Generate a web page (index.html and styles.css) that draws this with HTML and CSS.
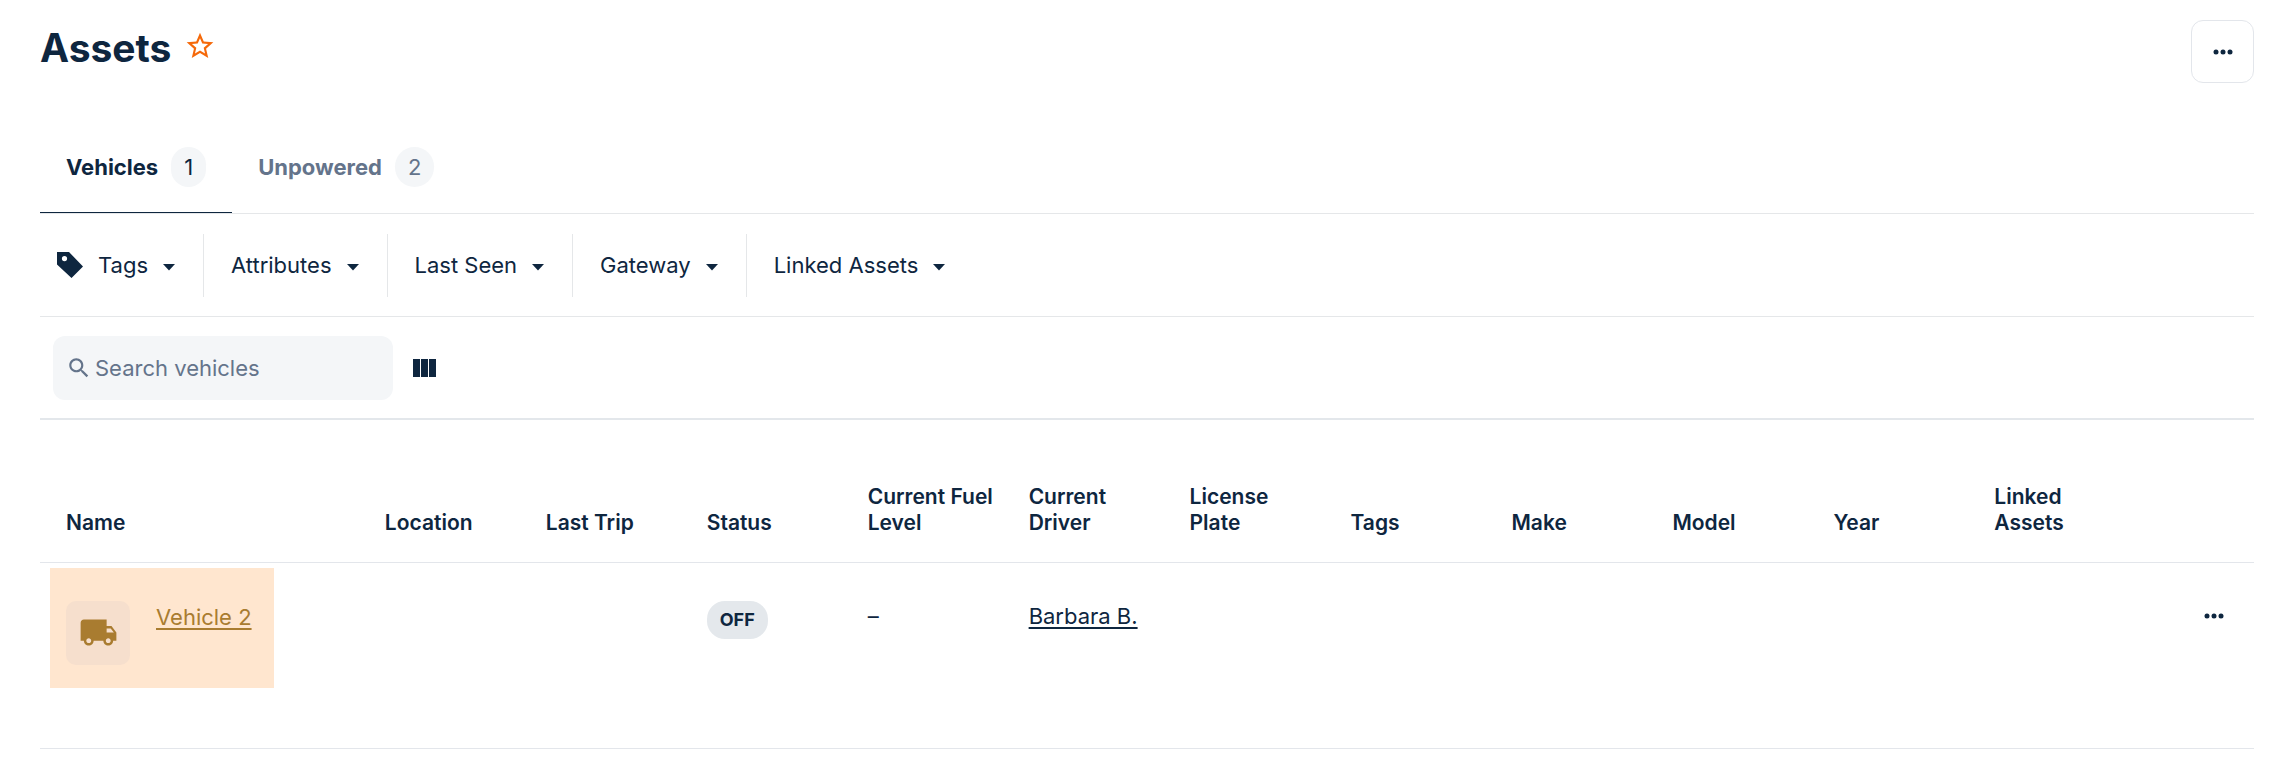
FILE: index.html
```html
<!DOCTYPE html>
<html lang="en">
<head>
    <meta charset="UTF-8">
    <meta name="viewport" content="width=device-width, initial-scale=1.0">
    <title>Assets</title>
    <link rel="stylesheet" href="styles.css">
</head>
<body>
    <div class="page">
        <header>
            <h1>Assets</h1>
            <button class="star" aria-label="Add to favorites">
                <svg width="32" height="32" viewBox="0 0 24 24"><path d="M22 9.24l-7.19-.62L12 2 9.19 8.63 2 9.24l5.46 4.73L5.82 21 12 17.27 18.18 21l-1.63-7.03L22 9.24zM12 15.4l-3.76 2.27 1-4.28-3.32-2.88 4.38-.38L12 6.1l1.71 4.04 4.38.38-3.32 2.88 1 4.28L12 15.4z"/></svg>
            </button>
            <button class="more" aria-label="More actions">
                <svg width="20" height="6" viewBox="0 0 20 6"><circle cx="3" cy="3" r="2.5"/><circle cx="10" cy="3" r="2.5"/><circle cx="17" cy="3" r="2.5"/></svg>
            </button>
        </header>
        <nav class="tabs">
            <a href="#vehicles" class="tab active">Vehicles <span class="count">1</span></a>
            <a href="#unpowered" class="tab">Unpowered <span class="count">2</span></a>
        </nav>
        <main>
            <section class="filters">
                <button class="filter">
                    <svg class="tag-icon" width="26" height="26" viewBox="0 0 26 26"><path fill-rule="evenodd" d="M0 0h12l14 14.5L14.5 26 0 12.5zM7.5 4a2.6 2.6 0 1 0 0 5.2 2.6 2.6 0 0 0 0-5.2z"/></svg>
                    Tags
                    <svg class="caret" width="12" height="7" viewBox="0 0 12 7"><path d="M0 0h12L6 6.5z"/></svg>
                </button>
                <button class="filter">
                    Attributes
                    <svg class="caret" width="12" height="7" viewBox="0 0 12 7"><path d="M0 0h12L6 6.5z"/></svg>
                </button>
                <button class="filter">
                    Last Seen
                    <svg class="caret" width="12" height="7" viewBox="0 0 12 7"><path d="M0 0h12L6 6.5z"/></svg>
                </button>
                <button class="filter">
                    Gateway
                    <svg class="caret" width="12" height="7" viewBox="0 0 12 7"><path d="M0 0h12L6 6.5z"/></svg>
                </button>
                <button class="filter">
                    Linked Assets
                    <svg class="caret" width="12" height="7" viewBox="0 0 12 7"><path d="M0 0h12L6 6.5z"/></svg>
                </button>
            </section>
            <section class="toolbar">
                <label class="search">
                    <svg width="26" height="26" viewBox="0 0 24 24"><path d="M15.5 14h-.79l-.28-.27C15.41 12.59 16 11.11 16 9.5 16 5.91 13.09 3 9.5 3S3 5.91 3 9.5 5.91 16 9.5 16c1.61 0 3.09-.59 4.23-1.57l.27.28v.79l5 4.99L20.49 19l-4.99-5zm-6 0C7.01 14 5 11.99 5 9.5S7.01 5 9.5 5 14 7.01 14 9.5 11.99 14 9.5 14z"/></svg>
                    <input type="text" placeholder="Search vehicles" aria-label="Search vehicles">
                </label>
                <button class="columns" aria-label="Edit columns">
                    <svg width="23" height="18" viewBox="0 0 23 18"><path d="M0 0h7v18H0zM8 0h7v18H8zM16 0h7v18h-7z"/></svg>
                </button>
            </section>
            <table>
                <thead>
                    <tr>
                        <th class="col-name">Name</th>
                        <th>Location</th>
                        <th>Last Trip</th>
                        <th>Status</th>
                        <th>Current Fuel Level</th>
                        <th>Current Driver</th>
                        <th>License Plate</th>
                        <th>Tags</th>
                        <th>Make</th>
                        <th>Model</th>
                        <th>Year</th>
                        <th>Linked Assets</th>
                        <th class="col-menu"></th>
                    </tr>
                </thead>
                <tbody>
                    <tr>
                        <td class="name-cell">
                            <div class="vehicle">
                                <div class="thumb">
                                    <svg width="39" height="39" viewBox="0 0 24 24"><path d="M20 8h-3V4H3c-1.1 0-2 .9-2 2v11h2c0 1.66 1.34 3 3 3s3-1.34 3-3h6c0 1.66 1.34 3 3 3s3-1.34 3-3h2v-5l-3-4zM6 18.5c-.83 0-1.5-.67-1.5-1.5s.67-1.5 1.5-1.5 1.5.67 1.5 1.5-.67 1.5-1.5 1.5zm13.5-9l1.96 2.5H17V9.5h2.5zm-1.5 9c-.83 0-1.5-.67-1.5-1.5s.67-1.5 1.5-1.5 1.5.67 1.5 1.5-.67 1.5-1.5 1.5z"/></svg>
                                </div>
                                <a href="#vehicle-2">Vehicle 2</a>
                            </div>
                        </td>
                        <td></td>
                        <td></td>
                        <td><span class="status">OFF</span></td>
                        <td>–</td>
                        <td><a href="#driver">Barbara B.</a></td>
                        <td></td>
                        <td></td>
                        <td></td>
                        <td></td>
                        <td></td>
                        <td></td>
                        <td class="menu-cell">
                            <button aria-label="Vehicle actions">
                                <svg width="20" height="6" viewBox="0 0 20 6"><circle cx="3" cy="3" r="2.5"/><circle cx="10" cy="3" r="2.5"/><circle cx="17" cy="3" r="2.5"/></svg>
                            </button>
                        </td>
                    </tr>
                </tbody>
            </table>
        </main>
    </div>
</body>
</html>
```
FILE: styles.css
```css
*{
    margin:0;
    padding:0;
    box-sizing: border-box;
}
body{
    background: #fff;
    color: #0e263f;
    font-family: Inter, sans-serif;
    font-size: 22px;
    line-height: 30px;
}
button{
    appearance: none;
    border: none;
    background: none;
    color: inherit;
    font: inherit;
    cursor: pointer;
}
svg{
    display: block;
    flex: none;
    fill: currentColor;
}
a{
    color: inherit;
}
.page{
    padding: 20px 36px 0 40px;
}
header{
    display: flex;
    align-items: flex-start;
    height: 98px;
}
h1{
    font-size: 39px;
    line-height: 56px;
    font-weight: 700;
}
.star{
    margin: 10px 0 0 13px;
    color: #f5690a;
}
.more{
    display: flex;
    align-items: center;
    justify-content: center;
    width: 63px;
    height: 63px;
    margin-left: auto;
    border: 1px solid #e3e6eb;
    border-radius: 12px;
}
/* tabs */
.tabs{
    display: flex;
    height: 96px;
    border-bottom: 1px solid #e5e7e9;
}
.tab{
    display: flex;
    align-items: center;
    gap: 13px;
    padding: 3px 26px 0;
    border-bottom: 1px solid transparent;
    color: #64748b;
    font-weight: 700;
    text-decoration: none;
}
.tab.active{
    color: #0e263f;
    border-color: #0e263f;
}
.count{
    padding: 5px 13px;
    border-radius: 20px;
    background: #f4f6f8;
    font-weight: 400;
}
/* filter row */
.filters{
    display: flex;
    padding: 20px 0 19px;
    border-bottom: 1px solid #e5e7e9;
}
.filter{
    display: flex;
    align-items: center;
    height: 63px;
    padding: 0 28px 2px 27px;
    border-right: 1px solid #e5e7e9;
}
.filter:first-child{
    padding-left: 17px;
}
.filter:last-child{
    border-right: none;
}
.tag-icon{
    margin-right: 15px;
}
.caret{
    margin: 5px 0 0 15px;
}
/* search */
.toolbar{
    display: flex;
    align-items: center;
    gap: 20px;
    padding: 19px 13px 18px;
    border-bottom: 2px solid #e3e7eb;
}
.search{
    display: flex;
    align-items: center;
    gap: 3px;
    width: 340px;
    height: 64px;
    padding: 0 13px;
    border-radius: 12px;
    background: #f4f6f8;
    color: #64748b;
}
input{
    flex: 1;
    min-width: 0;
    border: none;
    outline: none;
    background: none;
    color: #0e263f;
    font: inherit;
}
input::placeholder{
    color: #64748b;
    opacity: 1;
}
/* table */
table{
    width: 100%;
    table-layout: fixed;
    border-collapse: collapse;
}
th{
    width: 7.27%;
    height: 142px;
    padding: 0 8px 26px 26px;
    border-bottom: 1px solid #e3e6eb;
    font-size: 21px;
    line-height: 26px;
    font-weight: 600;
    text-align: left;
    vertical-align: bottom;
}
.col-name{
    width: 14.4%;
}
.col-menu{
    width: auto;
}
td{
    height: 186px;
    padding: 38px 0 0 26px;
    border-bottom: 1px solid #e3e6eb;
    vertical-align: top;
}
td a{
    text-decoration-thickness: 2px;
    text-underline-offset: 3px;
}
.name-cell{
    padding: 5px 0 0 10px;
}
.vehicle{
    display: flex;
    gap: 26px;
    width: 224px;
    height: 120px;
    padding: 33px 16px 0;
    background: #ffe6cf;
    color: #a97c30;
    line-height: 32px;
}
.thumb{
    display: flex;
    align-items: center;
    justify-content: center;
    width: 64px;
    height: 64px;
    border-radius: 10px;
    background: #f6dfcd;
}
.status{
    display: inline-block;
    padding: 4px 13px;
    border-radius: 18px;
    background: #e4e8ec;
    font-size: 18px;
    font-weight: 700;
}
.menu-cell{
    padding: 38px 30px 0 0;
}
.menu-cell button{
    display: flex;
    align-items: center;
    height: 30px;
    margin-left: auto;
}
```
